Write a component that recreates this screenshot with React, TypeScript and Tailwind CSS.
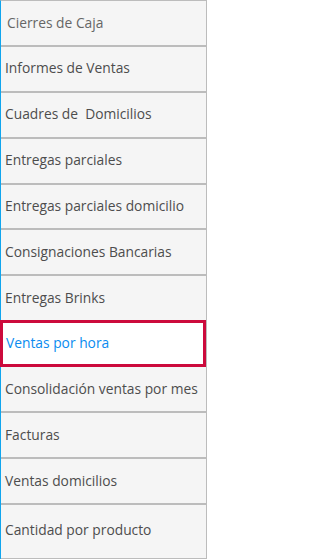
const items = [
  "Cierres de Caja",
  "Informes de Ventas",
  "Cuadres de  Domicilios",
  "Entregas parciales",
  "Entregas parciales domicilio",
  "Consignaciones Bancarias",
  "Entregas Brinks",
  "Ventas por hora",
  "Consolidación ventas por mes",
  "Facturas",
  "Ventas domicilios",
  "Cantidad por producto",
];

const active = "Ventas por hora";

export default function App() {
  return (
    <div className="h-[559px] w-[207px] overflow-hidden bg-white font-['Open_Sans','Noto_Sans',sans-serif]">
      <ul className="flex h-full flex-col border-t border-r border-l border-t-[#bcbcbc] border-r-[#bcbcbc] border-l-[#10a5ee] bg-[#f5f5f5]">
        {items.map((label, i) => {
          const isActive = label === active;
          const isLast = i === items.length - 1;
          if (isActive) {
            return (
              <li
                key={label}
                className="-mt-[2px] -ml-px flex h-[47px] shrink-0 items-center border-[3px] border-[#cc0a3c] bg-white pl-[3px] text-[13.8px] text-[#0a8cf0]"
              >
                <span className="whitespace-pre">{label}</span>
              </li>
            );
          }
          return (
            <li
              key={label}
              className={
                isLast
                  ? "flex flex-1 items-center border-b border-[#bcbcbc] pb-[2px] pl-[4px] text-[13.8px] text-[#4d4d4d]"
                  : "flex h-[45.9px] shrink-0 items-center border-b-2 border-[#bcbcbc] pl-[4px] text-[13.8px] text-[#4d4d4d]"
              }
            >
              <span className={i === 0 ? "whitespace-pre pl-[2px] text-[#666666]" : "whitespace-pre"}>
                {label}
              </span>
            </li>
          );
        })}
      </ul>
    </div>
  );
}
